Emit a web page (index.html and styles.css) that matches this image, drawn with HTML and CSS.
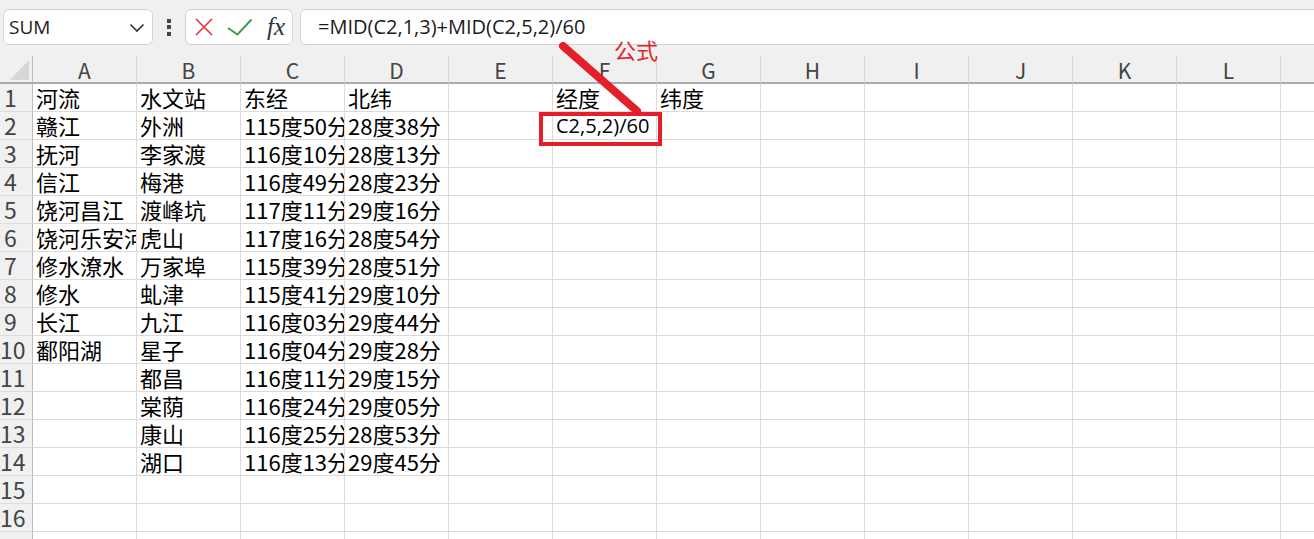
FILE: index.html
```html
<!DOCTYPE html>
<html lang="zh-CN">
<head>
<meta charset="utf-8">
<title>Sheet</title>
<link rel="stylesheet" href="styles.css">
</head>
<body>
<div class="app">
  <div class="toolbar">
    <div class="namebox">
      <span class="name">SUM</span>
      <svg class="chev" viewBox="0 0 16 10" width="16" height="10"><path d="M1.5 1.5 L8 8 L14.5 1.5" fill="none" stroke="#333" stroke-width="1.6"/></svg>
    </div>
    <div class="vdots"><i></i><i></i><i></i></div>
    <div class="btns">
      <svg class="ico-x" viewBox="0 0 18 18" width="18" height="18"><path d="M1 1 L17 17 M17 1 L1 17" stroke="#e8383d" stroke-width="1.7" fill="none"/></svg>
      <svg class="ico-ok" viewBox="0 0 26 18" width="26" height="18"><path d="M1 10 L10.5 16.5 L24.5 1.5" stroke="#3a9c4a" stroke-width="1.9" fill="none"/></svg>
      <span class="fx">fx</span>
    </div>
    <div class="formula">=MID(C2,1,3)+MID(C2,5,2)/60</div>
  </div>

  <div class="sheet">
    <div class="corner"><span class="tri"></span></div><div class="ch">A</div><div class="ch">B</div><div class="ch">C</div><div class="ch">D</div><div class="ch">E</div><div class="ch">F</div><div class="ch">G</div><div class="ch">H</div><div class="ch">I</div><div class="ch">J</div><div class="ch">K</div><div class="ch">L</div><div class="ch">M</div>

    <div class="rh">1</div><div>河流</div><div>水文站</div><div>东经</div><div>北纬</div><div></div><div>经度</div><div>纬度</div><div></div><div></div><div></div><div></div><div></div><div></div>
    <div class="rh">2</div><div>赣江</div><div>外洲</div><div>115度50分</div><div>28度38分</div><div></div><div class="edit">C2,5,2)/60</div><div></div><div></div><div></div><div></div><div></div><div></div><div></div>
    <div class="rh">3</div><div>抚河</div><div>李家渡</div><div>116度10分</div><div>28度13分</div><div></div><div></div><div></div><div></div><div></div><div></div><div></div><div></div><div></div>
    <div class="rh">4</div><div>信江</div><div>梅港</div><div>116度49分</div><div>28度23分</div><div></div><div></div><div></div><div></div><div></div><div></div><div></div><div></div><div></div>
    <div class="rh">5</div><div>饶河昌江</div><div>渡峰坑</div><div>117度11分</div><div>29度16分</div><div></div><div></div><div></div><div></div><div></div><div></div><div></div><div></div><div></div>
    <div class="rh">6</div><div>饶河乐安河</div><div>虎山</div><div>117度16分</div><div>28度54分</div><div></div><div></div><div></div><div></div><div></div><div></div><div></div><div></div><div></div>
    <div class="rh">7</div><div>修水潦水</div><div>万家埠</div><div>115度39分</div><div>28度51分</div><div></div><div></div><div></div><div></div><div></div><div></div><div></div><div></div><div></div>
    <div class="rh">8</div><div>修水</div><div>虬津</div><div>115度41分</div><div>29度10分</div><div></div><div></div><div></div><div></div><div></div><div></div><div></div><div></div><div></div>
    <div class="rh">9</div><div>长江</div><div>九江</div><div>116度03分</div><div>29度44分</div><div></div><div></div><div></div><div></div><div></div><div></div><div></div><div></div><div></div>
    <div class="rh">10</div><div>鄱阳湖</div><div>星子</div><div>116度04分</div><div>29度28分</div><div></div><div></div><div></div><div></div><div></div><div></div><div></div><div></div><div></div>
    <div class="rh">11</div><div></div><div>都昌</div><div>116度11分</div><div>29度15分</div><div></div><div></div><div></div><div></div><div></div><div></div><div></div><div></div><div></div>
    <div class="rh">12</div><div></div><div>棠荫</div><div>116度24分</div><div>29度05分</div><div></div><div></div><div></div><div></div><div></div><div></div><div></div><div></div><div></div>
    <div class="rh">13</div><div></div><div>康山</div><div>116度25分</div><div>28度53分</div><div></div><div></div><div></div><div></div><div></div><div></div><div></div><div></div><div></div>
    <div class="rh">14</div><div></div><div>湖口</div><div>116度13分</div><div>29度45分</div><div></div><div></div><div></div><div></div><div></div><div></div><div></div><div></div><div></div>
    <div class="rh">15</div><div></div><div></div><div></div><div></div><div></div><div></div><div></div><div></div><div></div><div></div><div></div><div></div><div></div>
    <div class="rh">16</div><div></div><div></div><div></div><div></div><div></div><div></div><div></div><div></div><div></div><div></div><div></div><div></div><div></div>
    <div class="rh"></div><div></div><div></div><div></div><div></div><div></div><div></div><div></div><div></div><div></div><div></div><div></div><div></div><div></div>
  </div>

  <div class="redbox"></div>
  <svg class="arrow" viewBox="0 0 1314 539" width="1314" height="539"><line x1="563" y1="46" x2="637" y2="111" stroke="#e51f2a" stroke-width="8" stroke-linecap="round"/></svg>
  <span class="label">公式</span>
</div>
</body>
</html>
```

FILE: styles.css
```css
html, body {
  margin: 0;
  padding: 0;
}
body {
  width: 1314px;
  height: 539px;
  overflow: hidden;
  background: #ffffff;
  font-family: "Noto Sans CJK SC", "Noto Sans", sans-serif;
}
.app {
  position: relative;
  width: 1314px;
  height: 539px;
  overflow: hidden;
}

/* ---------- toolbar ---------- */
.toolbar {
  height: 56px;
  box-sizing: border-box;
  padding: 9px 0 0 3px;
  background: #f0f0f0;
  display: flex;
  align-items: flex-start;
  overflow: hidden;
}
.namebox {
  width: 150px;
  height: 36px;
  box-sizing: border-box;
  background: #fff;
  border: 1px solid #d3d3d3;
  border-radius: 6px;
  display: flex;
  align-items: center;
  justify-content: space-between;
  padding: 0 7px 0 5px;
}
.name {
  font-family: "Open Sans", sans-serif;
  font-size: 19px;
  color: #1b1b1b;
}
.chev {
  display: block;
  margin-top: 2px;
}
.vdots {
  width: 32px;
  height: 36px;
  display: flex;
  flex-direction: column;
  align-items: center;
  justify-content: center;
  gap: 2.5px;
}
.vdots i {
  display: block;
  width: 4px;
  height: 4px;
  background: #454545;
}
.btns {
  width: 108px;
  height: 36px;
  box-sizing: border-box;
  background: #fff;
  border: 1px solid #d3d3d3;
  border-radius: 6px;
  display: flex;
  align-items: center;
  padding-left: 9px;
}
.ico-x { display: block; }
.ico-ok { display: block; margin-left: 14px; }
.fx {
  margin-left: 14px;
  font-family: "Liberation Serif", serif;
  font-style: italic;
  font-size: 25px;
  line-height: 30px;
  color: #333;
}
.formula {
  flex: 1;
  margin-left: 7px;
  margin-right: -20px;
  height: 36px;
  box-sizing: border-box;
  background: #fff;
  border: 1px solid #d3d3d3;
  border-radius: 6px;
  padding-left: 17px;
  font-family: "Open Sans", sans-serif;
  font-size: 20px;
  line-height: 33px;
  color: #1b1b1b;
  white-space: nowrap;
}

/* ---------- sheet ---------- */
.sheet {
  display: grid;
  grid-template-columns: 33px repeat(13, 104px);
  grid-auto-rows: 28px;
}
.sheet > div {
  box-sizing: border-box;
  border-right: 1px solid #dadada;
  border-bottom: 1px solid #dadada;
  overflow: hidden;
  white-space: nowrap;
  padding-left: 3px;
  font-size: 22px;
  line-height: 27px;
  color: #000;
}
.sheet > .edit {
  font-family: "Open Sans", sans-serif;
  font-size: 20px;
  line-height: 27px;
}
.sheet > .ch {
  background: #f0f0f0;
  border-bottom: 2px solid #ababab;
  border-right-color: #d9d9d9;
  padding: 2px 0 0;
  text-align: center;
  font-size: 21px;
  line-height: 24px;
  color: #444;
}
.sheet > .rh {
  background: #f0f0f0;
  border-right-color: #bdbdbd;
  border-bottom-color: #dcdcdc;
  padding: 0 11px 0 0;
  text-align: center;
  font-size: 23px;
  line-height: 27px;
  color: #444;
}
.sheet > .corner {
  background: #f0f0f0;
  border-bottom: 2px solid #ababab;
  border-right-color: #bdbdbd;
  padding: 0 3px 2px 0;
  display: flex;
  justify-content: flex-end;
  align-items: flex-end;
}
.tri {
  display: block;
  width: 19px;
  height: 20px;
  background: #d7d7d7;
  clip-path: polygon(100% 0, 100% 100%, 0 100%);
}

/* ---------- annotation overlay ---------- */
.redbox {
  position: absolute;
  left: 539px;
  top: 112px;
  width: 123px;
  height: 34px;
  box-sizing: border-box;
  border: 4px solid #e51f2a;
}
.arrow {
  position: absolute;
  left: 0;
  top: 0;
  pointer-events: none;
}
.label {
  position: absolute;
  left: 614px;
  top: 38px;
  font-size: 22px;
  line-height: 22px;
  color: #e51f2a;
}
```
